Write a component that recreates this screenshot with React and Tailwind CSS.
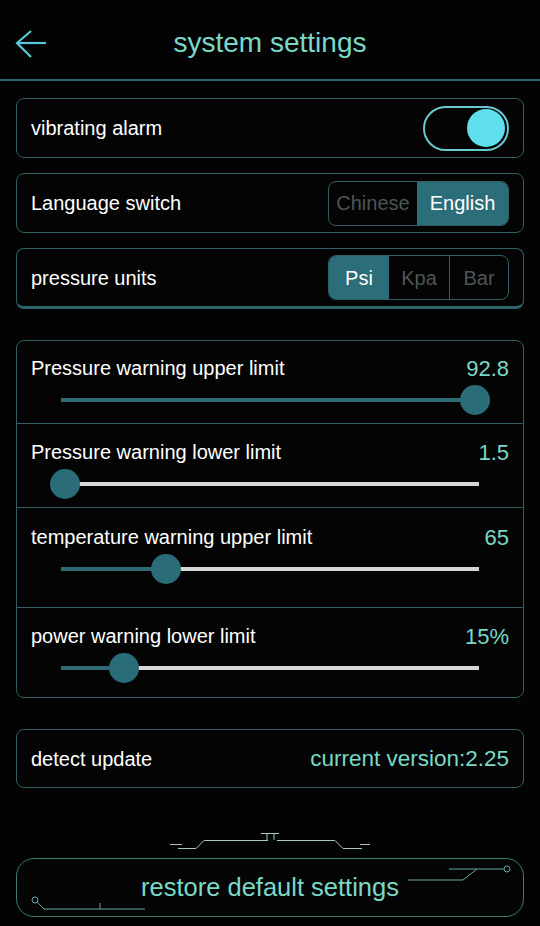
import React from 'react';

const card = 'mx-4 flex items-center justify-between rounded-lg border border-[#2f5f62] bg-[#040405] px-[14px]';

function Segmented({ options, active }) {
  return (
    <div className="flex h-[45px] overflow-hidden rounded-lg border border-[#2f5f62]">
      {options.map((o, i) => (
        <div
          key={o.label}
          className={
            'flex items-center justify-center text-[20px] ' +
            o.w +
            (i === active ? ' bg-[#2b6d78] text-white' : ' text-[#4b5656]') +
            (i > 0 && i !== active && i - 1 !== active ? ' border-l border-[#2f5f62]' : '')
          }
        >
          {o.label}
        </div>
      ))}
    </div>
  );
}

function SliderRow({ label, value, pct, className }) {
  return (
    <div className={'px-[14px] ' + className}>
      <div className="flex items-center justify-between leading-[23px]">
        <span className="text-[20px] text-white">{label}</span>
        <span className="text-[22px] text-[#7ad8c6]">{value}</span>
      </div>
      <div className="relative mx-[30px] mt-[5px] h-[30px]">
        <div className="absolute left-0 right-0 top-[13px] h-[4px] bg-[#d6d6d8]" />
        <div className="absolute left-0 top-[13px] h-[4px] bg-[#2f6a74]" style={{ width: pct + '%' }} />
        <div
          className="absolute top-0 h-[30px] w-[30px] -translate-x-1/2 rounded-full bg-[#2a6d78]"
          style={{ left: pct + '%' }}
        />
      </div>
    </div>
  );
}

export default function App() {
  return (
    <div className="min-h-[926px] w-[540px] bg-[#030304] font-['Liberation_Sans',Arial,sans-serif]">
      {/* header */}
      <div className="relative flex h-[81px] items-center justify-center border-b-2 border-[#2a6466] pt-[6px]">
        <svg className="absolute left-[14px] top-[29px]" width="34" height="30" viewBox="0 0 34 30" fill="none" stroke="#5ac6dc" strokeWidth="2.2">
          <path d="M17 2 L3 14 L17 28" />
          <path d="M4 14 H32" />
        </svg>
        <h1 className="text-[28px] text-[#7ad8c8]">system settings</h1>
      </div>

      <div className="pt-[17px]">
        <div className={card + ' h-[60px]'}>
          <span className="text-[20px] text-white">vibrating alarm</span>
          <div className="flex h-[45px] w-[86px] items-center justify-end rounded-full border-2 border-[#6cc8cc] pr-[2px]">
            <div className="h-[38px] w-[38px] rounded-full bg-[#5fdeed]" />
          </div>
        </div>

        <div className={card + ' mt-[15px] h-[60px]'}>
          <span className="text-[20px] text-white">Language switch</span>
          <Segmented
            active={1}
            options={[
              { label: 'Chinese', w: 'w-[88px]' },
              { label: 'English', w: 'w-[91px]' },
            ]}
          />
        </div>

        <div className={card + ' mt-[15px] h-[61px] border-b-[3px] border-b-[#2a6466]'}>
          <span className="text-[20px] text-white">pressure units</span>
          <Segmented
            active={0}
            options={[
              { label: 'Psi', w: 'w-[60px]' },
              { label: 'Kpa', w: 'w-[60px]' },
              { label: 'Bar', w: 'w-[59px]' },
            ]}
          />
        </div>

        {/* limits */}
        <div className="mx-4 mt-[31px] rounded-lg border border-[#2f5f62] bg-[#040405]">
          <SliderRow className="h-[83px] border-b border-[#2f5f62] pt-[16px]" label="Pressure warning upper limit" value="92.8" pct={99} />
          <SliderRow className="h-[84px] border-b border-[#2f5f62] pt-[17px]" label="Pressure warning lower limit" value="1.5" pct={1} />
          <SliderRow className="h-[100px] border-b border-[#2f5f62] pt-[18px]" label="temperature warning upper limit" value="65" pct={25} />
          <SliderRow className="h-[89px] pt-[17px]" label="power warning lower limit" value="15%" pct={15} />
        </div>

        <div className={card + ' mt-[31px] h-[59px]'}>
          <span className="text-[20px] text-white">detect update</span>
          <span className="text-[22.5px] text-[#7ad8c6]">current version:2.25</span>
        </div>

        {/* circuit decoration above button */}
        <div className="flex h-[70px] items-end justify-center pb-[7px]">
          <svg width="200" height="22" viewBox="0 0 200 22" fill="none" stroke="#a8c8c4" strokeWidth="1">
            <path d="M0 15.5 H12" />
            <path d="M8 19.5 H26 L34 11.5 H98" />
            <path d="M91 4.5 H109 M97 4.5 V11 M104 4.5 V11" />
            <path d="M107 11.5 H165 L173 19.5 H192" />
            <path d="M190 15.5 H200" />
          </svg>
        </div>

        <div className="relative mx-4 flex h-[59px] items-center justify-center rounded-[18px] border border-[#3d7a78] bg-[#060506]">
          <svg className="absolute left-[10px] top-[35px]" width="120" height="20" viewBox="0 0 120 20" fill="none" stroke="#5fa8a4" strokeWidth="1">
            <circle cx="8" cy="6" r="3" />
            <path d="M10 8 L17 15 H118" />
            <path d="M73 9 V15" />
          </svg>
          <svg className="absolute left-[388px] top-[6px]" width="106" height="20" viewBox="0 0 106 20" fill="none" stroke="#5fa8a4" strokeWidth="1">
            <circle cx="102" cy="4" r="3" />
            <path d="M44 4 H99" />
            <path d="M72 4 L58 15" />
            <path d="M3 15 H58" />
          </svg>
          <span className="relative text-[25.5px] text-[#7ad8c6]">restore default settings</span>
        </div>
      </div>
    </div>
  );
}
